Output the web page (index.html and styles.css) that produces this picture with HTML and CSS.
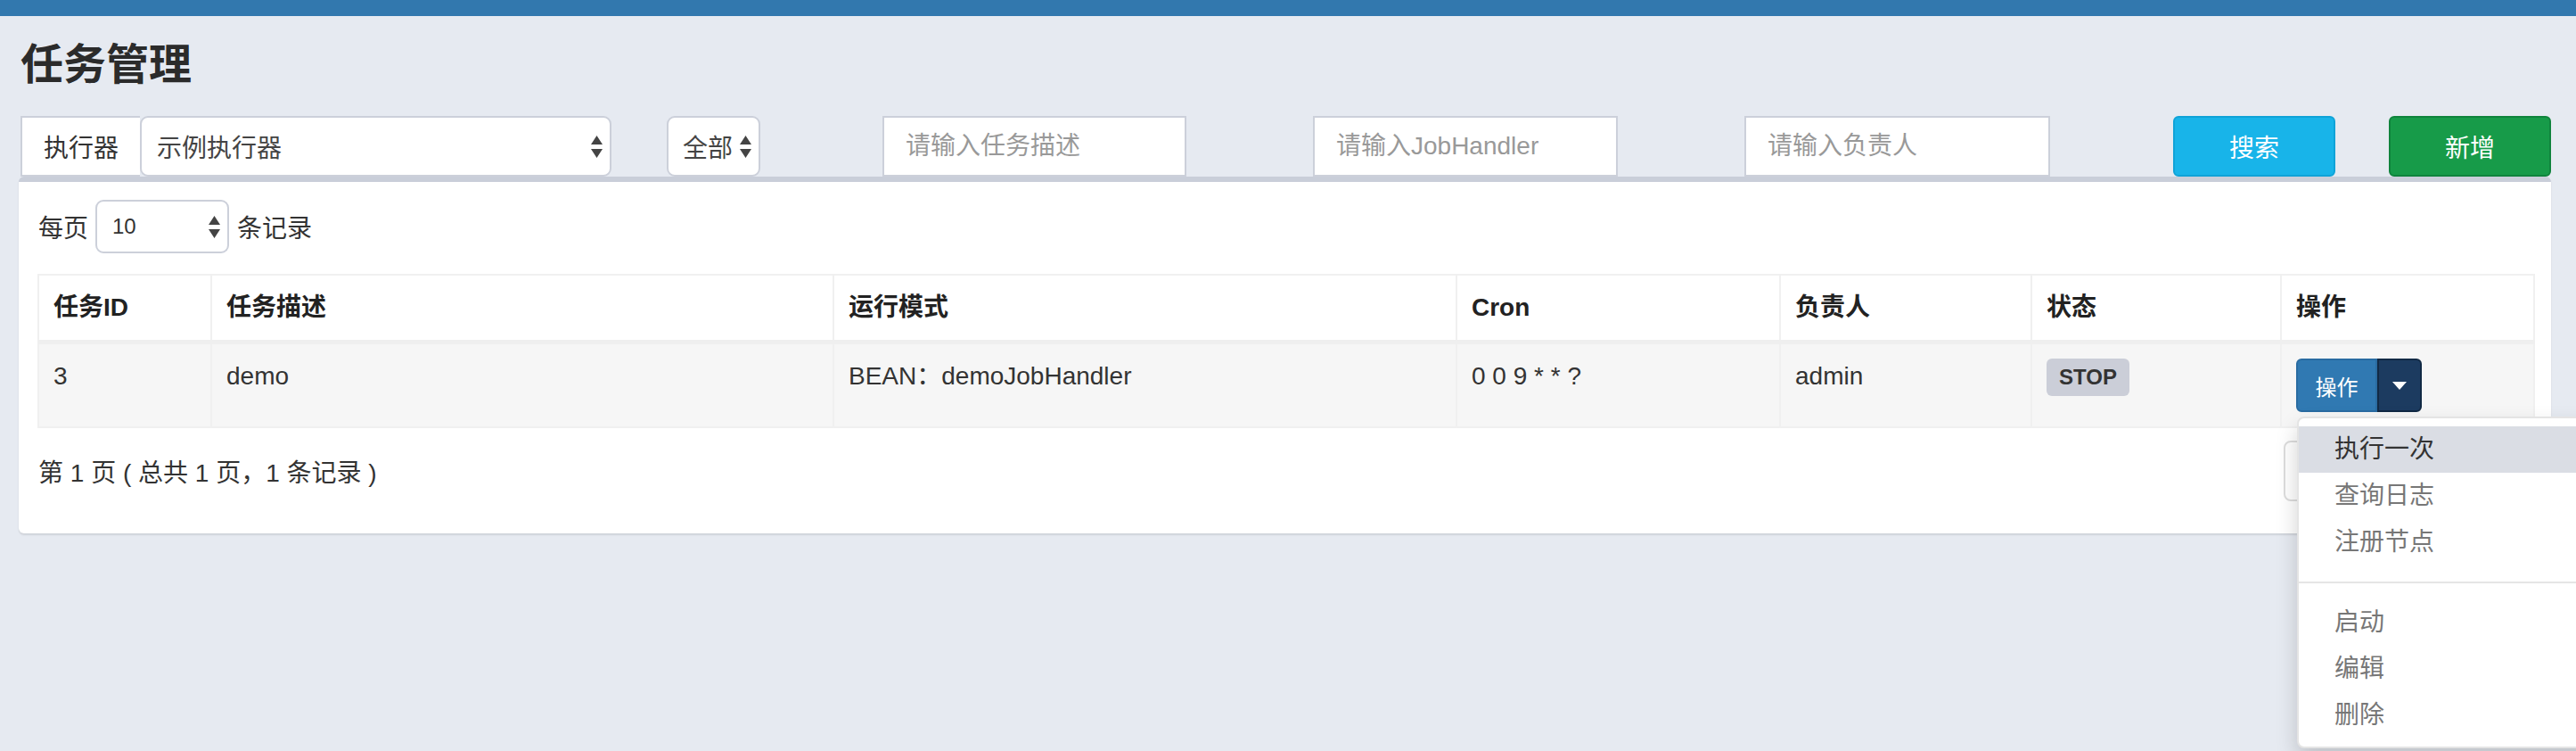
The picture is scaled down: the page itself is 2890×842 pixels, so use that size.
FILE: index.html
```html
<!DOCTYPE html>
<html lang="zh-CN">
<head>
<meta charset="utf-8">
<title>任务管理</title>
<link rel="stylesheet" href="styles.css">
</head>
<body>
<div class="topbar"></div>
<div class="content">
  <h1 class="title">任务管理</h1>
  <div class="filters">
    <div class="input-group">
      <span class="addon">执行器</span>
      <div class="select select-group"><span>示例执行器</span><svg class="arrows" width="13" height="25" viewBox="0 0 13 25"><path d="M6.5 0L13 10H0Z M0 15H13L6.5 25Z" fill="#444"/></svg></div>
    </div>
    <div class="select select-status"><span>全部</span><svg class="arrows" width="13" height="25" viewBox="0 0 13 25"><path d="M6.5 0L13 10H0Z M0 15H13L6.5 25Z" fill="#444"/></svg></div>
    <input class="field field-desc" type="text" placeholder="请输入任务描述">
    <input class="field field-handler" type="text" placeholder="请输入JobHandler">
    <input class="field field-author" type="text" placeholder="请输入负责人">
    <button class="btn btn-search" type="button">搜索</button>
    <button class="btn btn-add" type="button">新增</button>
  </div>
  <div class="box">
    <div class="length">
      <span>每页</span>
      <div class="select select-len"><span>10</span><svg class="arrows" width="13" height="25" viewBox="0 0 13 25"><path d="M6.5 0L13 10H0Z M0 15H13L6.5 25Z" fill="#444"/></svg></div>
      <span>条记录</span>
    </div>
    <table class="grid">
      <colgroup>
        <col class="c-id"><col class="c-desc"><col class="c-mode"><col class="c-cron"><col class="c-author"><col class="c-status"><col class="c-op">
      </colgroup>
      <thead>
        <tr><th>任务ID</th><th>任务描述</th><th>运行模式</th><th>Cron</th><th>负责人</th><th>状态</th><th>操作</th></tr>
      </thead>
      <tbody>
        <tr>
          <td>3</td>
          <td>demo</td>
          <td>BEAN：demoJobHandler</td>
          <td>0 0 9 * * ?</td>
          <td>admin</td>
          <td><span class="label">STOP</span></td>
          <td>
            <div class="btn-group">
              <button class="op-btn" type="button">操作</button>
              <button class="op-caret" type="button"><span class="caret"></span></button>
              <ul class="dropdown-menu">
                <li><a class="active-item">执行一次</a></li>
                <li><a>查询日志</a></li>
                <li><a>注册节点</a></li>
                <li class="divider"></li>
                <li><a>启动</a></li>
                <li><a>编辑</a></li>
                <li><a>删除</a></li>
              </ul>
            </div>
          </td>
        </tr>
      </tbody>
    </table>
    <div class="footer">
      <div class="info">第 1 页 ( 总共 1 页，1 条记录 )</div>
      <ul class="pagination"><li class="first"></li><li class="last"></li></ul>
    </div>
  </div>
</div>
</body>
</html>
```

FILE: styles.css
```css
* { box-sizing: border-box; }
html, body { margin: 0; overflow: hidden; }
body {
  width: 2890px;
  height: 842px;
  background: #e6eaf1;
  font-family: "Liberation Sans", "Noto Sans CJK SC", sans-serif;
  font-size: 28px;
  color: #333;
}
.topbar { height: 18px; background: #3278ae; }
.content { padding: 0 28px 0 21px; }
.title {
  margin: 28px 0 31px 2px;
  font-size: 48px;
  line-height: 53px;
  font-weight: 700;
  color: #2b2b2b;
}

/* filters */
.filters { display: flex; height: 68px; }
.input-group { display: flex; width: 663px; margin-left: 2px; }
.addon {
  width: 134px;
  display: flex;
  align-items: center;
  justify-content: center;
  background: #fff;
  border: 2px solid #ccd0da;
  border-right: 0;
  color: #333;
}
.select {
  display: flex;
  align-items: center;
  justify-content: space-between;
  background: #fff;
  border: 2px solid #ccd0da;
  border-radius: 9px;
  padding: 0 8px 0 17px;
  color: #444;
}
.select-group { flex: 1; }
.select-status { width: 105px; margin-left: 62px; padding-left: 16px; }
.field {
  height: 68px;
  border: 2px solid #ccd0da;
  background: #fff;
  padding: 0 24px;
  font-family: "Liberation Sans", "Noto Sans CJK SC", sans-serif;
  font-size: 28px;
  color: #555;
  outline: none;
}
.field::placeholder { color: #999; }
.field-desc { width: 341px; margin-left: 137px; }
.field-handler { width: 342px; margin-left: 142px; }
.field-author { width: 343px; margin-left: 142px; }
.btn {
  height: 68px;
  width: 182px;
  border: 2px solid;
  border-radius: 6px;
  color: #fff;
  font-family: "Liberation Sans", "Noto Sans CJK SC", sans-serif;
  font-size: 28px;
}
.btn-search { margin-left: 138px; background: #18b4e9; border-color: #0fa3d8; }
.btn-add { margin-left: 60px; background: #179b49; border-color: #0f843c; }

/* box */
.box {
  background: #fff;
  border-top: 6px solid #c9ced9;
  border-radius: 6px;
  box-shadow: 0 2px 2px rgba(0, 0, 0, 0.1);
  padding: 20px 20px 36px 21px;
}
.length { display: flex; align-items: center; height: 60px; padding-left: 1px; }
.select-len {
  width: 150px;
  height: 60px;
  margin: 0 9px 0 8px;
  font-size: 24px;
  color: #333;
}

/* table */
.grid {
  margin-top: 23px;
  width: 2800px;
  table-layout: fixed;
  border-collapse: collapse;
  border: 2px solid #f0f0f0;
}
.c-id { width: 194px; }
.c-desc { width: 698px; }
.c-mode { width: 699px; }
.c-cron { width: 363px; }
.c-author { width: 282px; }
.c-status { width: 280px; }
.c-op { width: 284px; }
.grid th {
  text-align: left;
  font-weight: 700;
  padding: 16px 16px;
  line-height: 40px;
  background: #fff;
  border: 2px solid #f0f0f0;
  border-bottom: 5px solid #efefef;
  color: #222;
}
.grid td {
  padding: 16px 16px;
  line-height: 40px;
  vertical-align: top;
  background: #f6f6f6;
  border: 2px solid #f0f0f0;
  color: #333;
}
.label {
  display: inline-block;
  height: 42px;
  line-height: 42px;
  padding: 0 14px;
  background: #cbced8;
  border-radius: 6px;
  font-size: 24px;
  font-weight: 700;
  color: #333;
}
.btn-group { position: relative; display: flex; height: 60px; }
.op-btn {
  height: 60px;
  width: 91px;
  background: #3079b2;
  border: 2px solid #2a6ca2;
  border-radius: 6px 0 0 6px;
  color: #fff;
  font-family: "Liberation Sans", "Noto Sans CJK SC", sans-serif;
  font-size: 24px;
  padding: 0;
}
.op-btn, .op-caret { cursor: pointer; }
.op-caret {
  height: 60px;
  width: 50px;
  background: #1c3b60;
  border: 2px solid #122a45;
  border-radius: 0 6px 6px 0;
  display: flex;
  align-items: center;
  justify-content: center;
  padding: 0;
}
.caret {
  width: 0;
  height: 0;
  border-top: 9px solid #fff;
  border-left: 8px solid transparent;
  border-right: 8px solid transparent;
}
.dropdown-menu {
  position: absolute;
  top: calc(100% + 5px);
  left: 1px;
  width: 340px;
  margin: 0;
  padding: 9px 0;
  list-style: none;
  background: #fff;
  border: 2px solid #e4e4e4;
  border-radius: 8px;
  box-shadow: 0 12px 24px rgba(0, 0, 0, 0.175);
  z-index: 10;
}
.dropdown-menu a {
  display: block;
  padding: 6px 40px;
  line-height: 40px;
  font-size: 28px;
  color: #777;
  white-space: nowrap;
}
.dropdown-menu .active-item { background: #dadde4; color: #333; }
.dropdown-menu .divider { height: 2px; margin: 18px 0; background: #e5e5e5; }

/* footer */
.footer {
  display: flex;
  align-items: center;
  justify-content: space-between;
  margin-top: 14px;
  height: 68px;
  padding-left: 1px;
}
.info { color: #333; }
.pagination { display: flex; margin: 0; padding: 0; list-style: none; }
.pagination li {
  width: 140px;
  height: 68px;
  border: 2px solid #ddd;
  background: #fff;
}
.pagination .first { border-radius: 8px 0 0 8px; }
.pagination .last { border-left: 0; border-radius: 0 8px 8px 0; }
```
